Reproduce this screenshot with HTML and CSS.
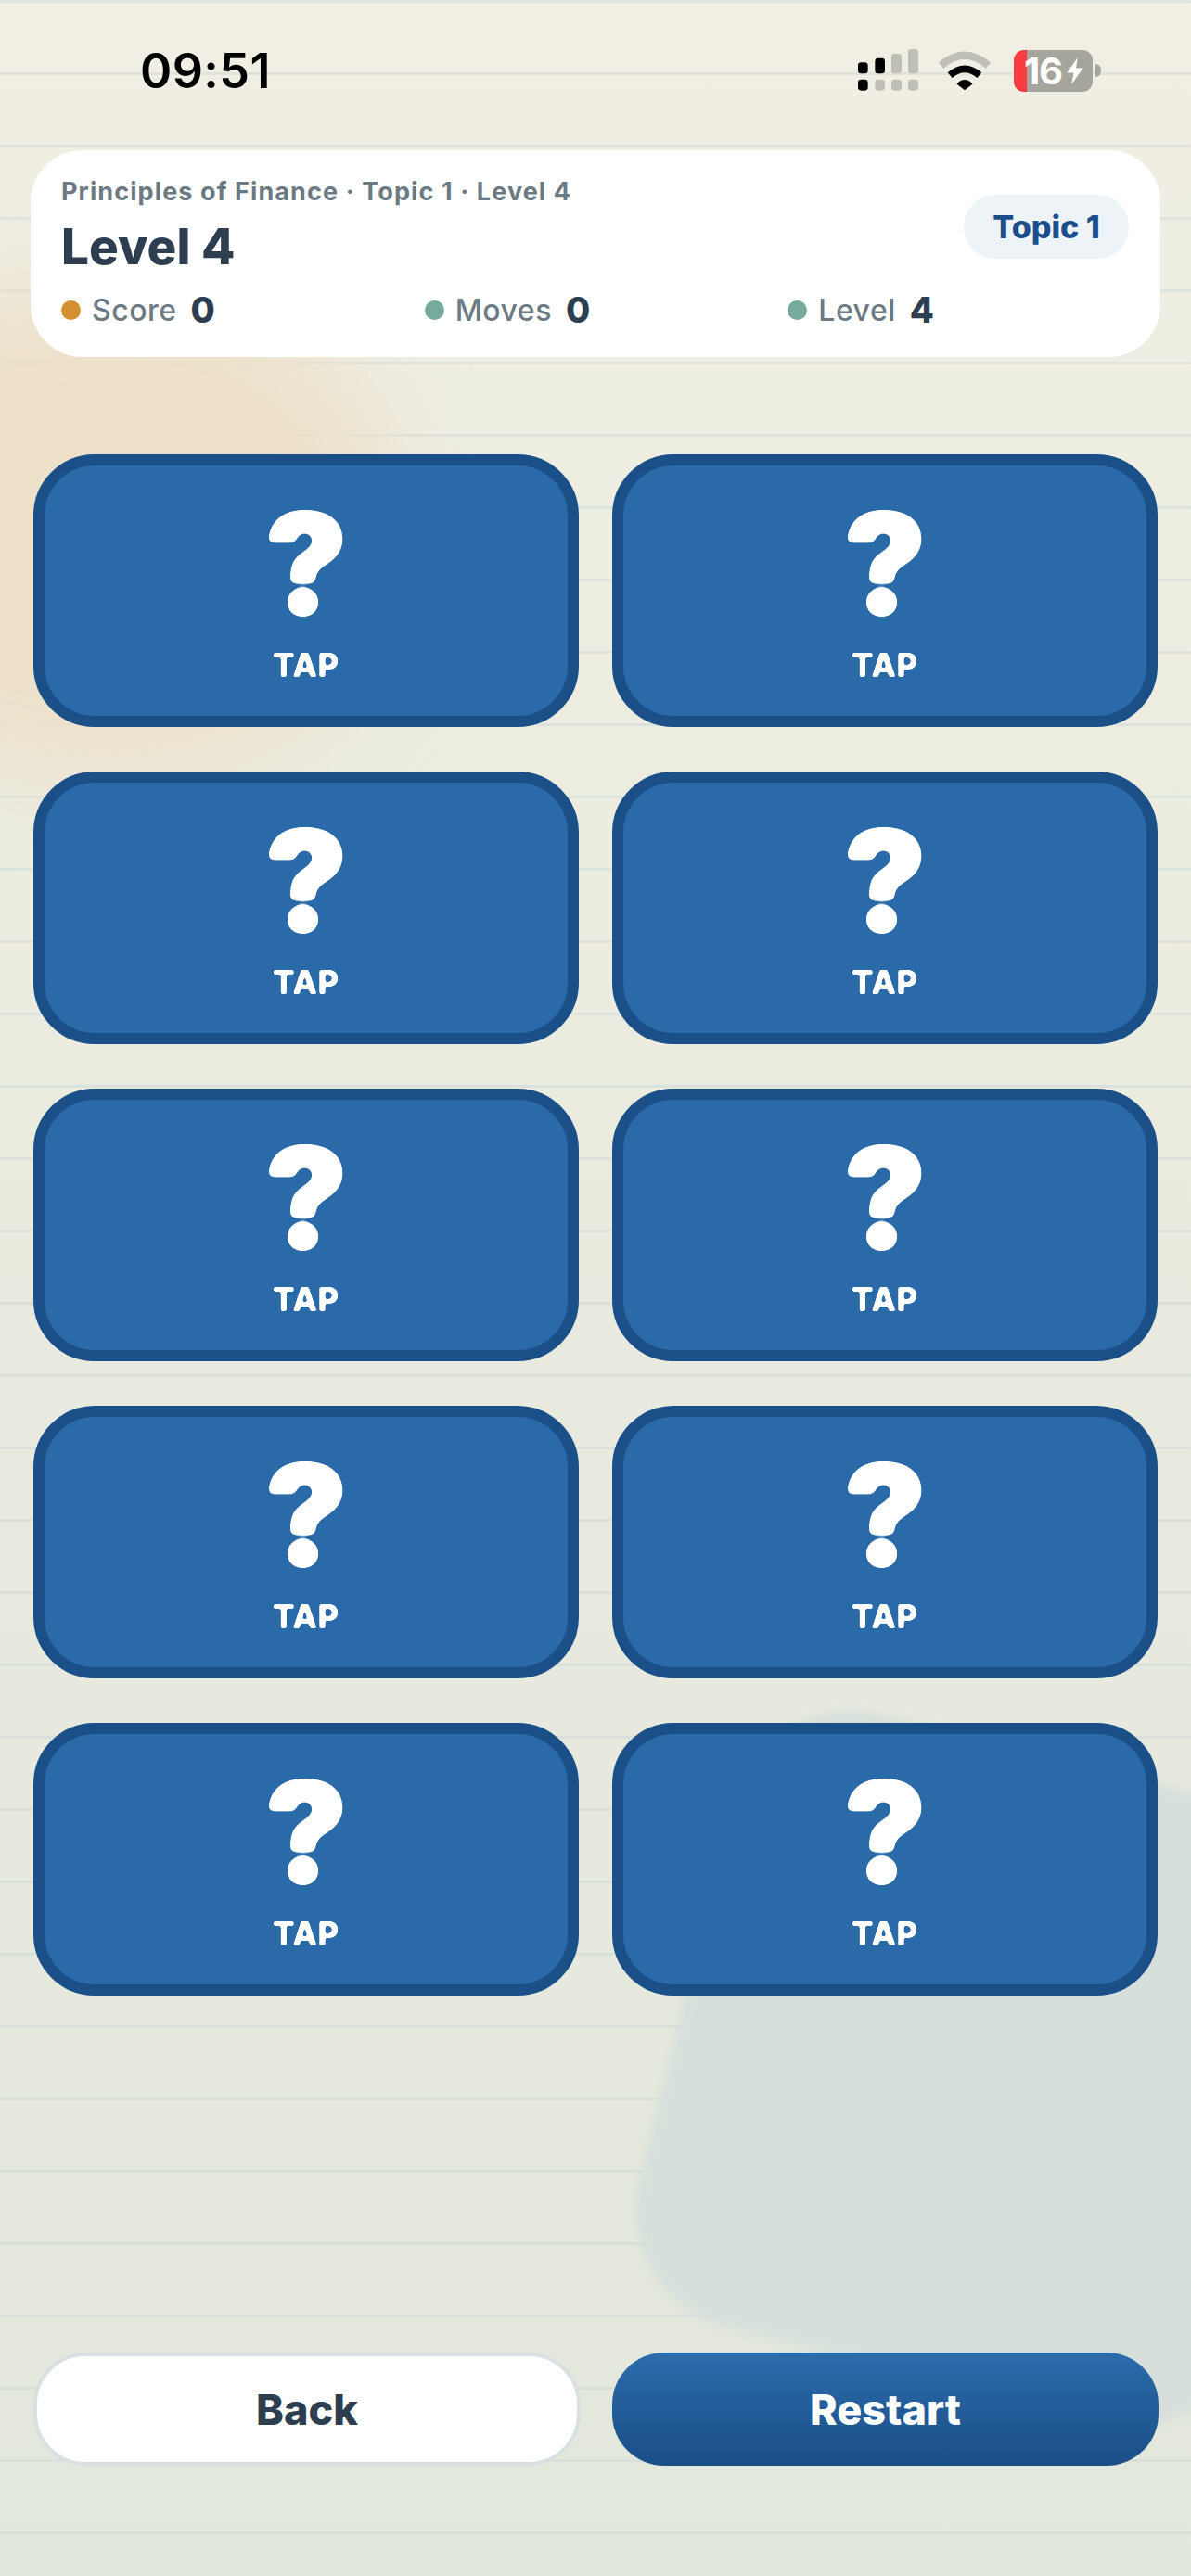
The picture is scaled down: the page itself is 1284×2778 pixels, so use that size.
FILE: index.html
```html
<!DOCTYPE html>
<html lang="en">
<head>
  <meta charset="UTF-8">
  <title>Level 4 – Principles of Finance</title>
  <meta name="viewport" content="width=device-width, initial-scale=1.0">
  <link rel="stylesheet" href="styles.css">
</head>
<body>
  <!-- rounds off the letter corners, the app uses a rounded face -->
  <svg class="defs" width="0" height="0">
    <filter id="round-big" x="-10%" y="-10%" width="120%" height="120%">
      <feGaussianBlur stdDeviation="3"/>
      <feComponentTransfer><feFuncA type="linear" slope="10" intercept="-4"/></feComponentTransfer>
    </filter>
    <filter id="round-small" x="-10%" y="-10%" width="120%" height="120%">
      <feGaussianBlur stdDeviation="1.2"/>
      <feComponentTransfer><feFuncA type="linear" slope="5" intercept="-1.9"/></feComponentTransfer>
    </filter>
  </svg>

  <div class="backdrop">
    <div class="blob blob-orange"></div>
    <div class="blob blob-grey"></div>
  </div>

  <main class="screen">
    <div class="statusbar">
      <span class="clock">09:51</span>
      <div class="status-icons">
        <svg class="signal" viewBox="0 0 198 138">
          <rect x="0" y="43" width="32" height="36" rx="10" fill="#000"/>
          <rect x="55" y="29" width="32" height="50" rx="10" fill="#000"/>
          <rect x="108" y="15" width="33" height="64" rx="10" fill="#bfbfb6"/>
          <rect x="162" y="0" width="33" height="79" rx="10" fill="#bfbfb6"/>
          <rect x="0" y="98" width="32" height="36" rx="10" fill="#000"/>
          <rect x="55" y="98" width="32" height="36" rx="10" fill="#bfbfb6"/>
          <rect x="108" y="98" width="33" height="36" rx="10" fill="#bfbfb6"/>
          <rect x="162" y="98" width="33" height="36" rx="10" fill="#bfbfb6"/>
        </svg>
        <svg class="wifi" viewBox="395 70 180 130">
          <path d="M408 117 Q485 52 562 117" fill="none" stroke="#bfbfb6" stroke-width="25"/>
          <path d="M437 149 Q485 108 533 149" fill="none" stroke="#000" stroke-width="23"/>
          <path d="M459 177 Q485 150 511 177 L485 198 Z" fill="#000"/>
        </svg>
        <div class="battery">
          <div class="battery-body">
            <span class="battery-num">16</span>
            <svg class="bolt" viewBox="0 0 20 30">
              <path d="M13 0 L1 17 H8.5 L6 30 L19 12 H11 Z" fill="#fff"/>
            </svg>
          </div>
          <div class="battery-nub"></div>
        </div>
      </div>
    </div>

    <section class="header-card">
      <div class="header-top">
        <div>
          <div class="crumb">Principles of Finance · Topic 1 · Level 4</div>
          <h1>Level 4</h1>
        </div>
        <span class="pill">Topic 1</span>
      </div>
      <div class="stats">
        <div class="stat"><i class="dot dot-orange"></i><span class="stat-label">Score</span><b>0</b></div>
        <div class="stat"><i class="dot dot-green"></i><span class="stat-label">Moves</span><b>0</b></div>
        <div class="stat"><i class="dot dot-green"></i><span class="stat-label">Level</span><b>4</b></div>
      </div>
    </section>

    <section class="board">
      <div class="tile"><span class="mark">?</span><span class="tap">TAP</span></div>
      <div class="tile"><span class="mark">?</span><span class="tap">TAP</span></div>
      <div class="tile"><span class="mark">?</span><span class="tap">TAP</span></div>
      <div class="tile"><span class="mark">?</span><span class="tap">TAP</span></div>
      <div class="tile"><span class="mark">?</span><span class="tap">TAP</span></div>
      <div class="tile"><span class="mark">?</span><span class="tap">TAP</span></div>
      <div class="tile"><span class="mark">?</span><span class="tap">TAP</span></div>
      <div class="tile"><span class="mark">?</span><span class="tap">TAP</span></div>
      <div class="tile"><span class="mark">?</span><span class="tap">TAP</span></div>
      <div class="tile"><span class="mark">?</span><span class="tap">TAP</span></div>
    </section>

    <div class="actions">
      <button class="btn btn-back">Back</button>
      <button class="btn btn-restart">Restart</button>
    </div>
  </main>
</body>
</html>
```

FILE: styles.css
```css
* {
  box-sizing: border-box;
}
html, body {
  margin: 0;
  height: 2778px;
  overflow: hidden;
}
body {
  position: relative;
  font-family: Inter, 'Liberation Sans', sans-serif;
  background-color: #e9eae0;
  background-image:
    linear-gradient(rgba(200, 214, 216, 0.45) 3px, transparent 3px),
    linear-gradient(180deg, #f1efe4 0%, #e9eadf 55%, #e2e7dc 100%);
  background-size: 100% 78px, 100% 100%;
}
.defs {
  position: absolute;
}

/* background shapes */
.backdrop {
  position: absolute;
  inset: 0;
  overflow: hidden;
}
.blob {
  position: absolute;
}
.blob-orange {
  left: -200px;
  top: 310px;
  width: 620px;
  height: 520px;
  border-radius: 45%;
  background: #ece0c9;
  filter: blur(50px);
}
.blob-grey {
  left: 730px;
  top: 1890px;
  width: 680px;
  height: 680px;
  border-radius: 130px;
  background: #d6dfdb;
  transform: rotate(14deg);
  filter: blur(6px);
}

.screen {
  position: relative;
  padding: 0 36px;
}

/* status bar */
.statusbar {
  display: flex;
  justify-content: space-between;
  align-items: center;
  height: 152px;
  margin: 0 -36px;
  padding: 0 97px 0 151px;
}
.clock {
  font-size: 52px;
  font-weight: 600;
  letter-spacing: 0.4px;
  color: #000;
}
.status-icons {
  display: flex;
  align-items: center;
  gap: 14px;
}
.signal {
  width: 66px;
  height: 46px;
}
.wifi {
  width: 60px;
  height: 43px;
  margin: 0 9px 0 5px;
}
.battery {
  display: flex;
  align-items: center;
  gap: 3px;
}
.battery-body {
  display: flex;
  align-items: center;
  justify-content: center;
  gap: 4px;
  width: 85px;
  height: 45px;
  padding-left: 2px;
  border-radius: 11px;
  background: linear-gradient(90deg, #fb3b42 14px, #a6a59d 14px);
}
.battery-num {
  font-size: 40px;
  font-weight: 700;
  letter-spacing: -1px;
  color: #fff;
}
.bolt {
  width: 20px;
  height: 29px;
}
.battery-nub {
  width: 6px;
  height: 14px;
  border-radius: 0 7px 7px 0;
  background: #a6a59d;
}

/* header */
.header-card {
  margin: 10px -3px 0;
  height: 223px;
  padding: 28px 34px 0 33px;
  background: #fff;
  border-radius: 56px;
}
.header-top {
  display: flex;
  justify-content: space-between;
  align-items: center;
}
.crumb {
  font-size: 27px;
  font-weight: 700;
  letter-spacing: 1.1px;
  line-height: 34px;
  color: #6b7a82;
}
h1 {
  margin: 12px 0 0;
  font-size: 53px;
  font-weight: 800;
  line-height: 60px;
  color: #2c3e50;
}
.pill {
  display: flex;
  align-items: center;
  justify-content: center;
  width: 178px;
  height: 69px;
  margin-top: 2px;
  border-radius: 34px;
  background: #eef3f7;
  font-size: 34px;
  font-weight: 800;
  color: #1a4f8b;
}
.stats {
  display: grid;
  grid-template-columns: repeat(3, 1fr);
  gap: 24px;
  margin-top: 15px;
}
.stat {
  display: flex;
  align-items: center;
}
.dot {
  width: 21px;
  height: 21px;
  border-radius: 50%;
  margin-right: 12px;
}
.dot-orange {
  background: #d4902f;
}
.dot-green {
  background: #74ab9c;
}
.stat-label {
  font-size: 32px;
  font-weight: 500;
  letter-spacing: 0.5px;
  color: #6c7a83;
  margin-right: 15px;
}
.stat b {
  font-size: 38px;
  font-weight: 800;
  color: #2c3e50;
}

/* tiles */
.board {
  display: grid;
  grid-template-columns: 588px 588px;
  grid-auto-rows: 294px;
  gap: 48px 36px;
  margin-top: 105px;
}
.tile {
  display: flex;
  flex-direction: column;
  align-items: center;
  background: #2b6aa9;
  border: 12px solid #1a4f88;
  border-radius: 66px;
  color: #fff;
}
.mark {
  margin-top: 46px;
  font-size: 150px;
  font-weight: 900;
  line-height: 120px;
  -webkit-text-stroke: 1.5px #fff;
  filter: url(#round-big);
}
.tap {
  margin-top: 29px;
  font-size: 35px;
  font-weight: 800;
  line-height: 40px;
  letter-spacing: 0.5px;
  filter: url(#round-small);
}

/* bottom buttons */
.actions {
  display: grid;
  grid-template-columns: 590px 589px;
  gap: 34px;
  margin-top: 385px;
}
.btn {
  height: 122px;
  border-radius: 56px;
  font-family: inherit;
  font-size: 45px;
  font-weight: 800;
}
.btn-back {
  background: #fff;
  border: 4px solid #d8e0e1;
  color: #2c3e50;
}
.btn-restart {
  background: linear-gradient(180deg, #2b6cab, #1a4e87);
  border: none;
  color: #fff;
}
```
